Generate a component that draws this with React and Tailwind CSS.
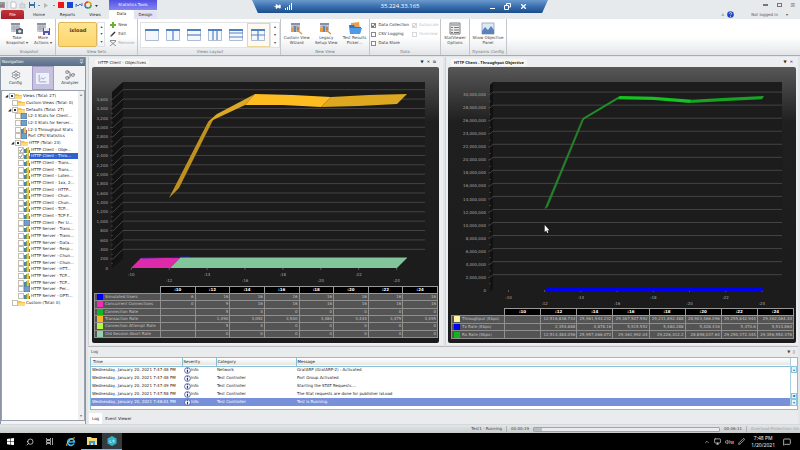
import { useState } from 'react';
import { Settings, Network, LineChart, Search, ChevronUp, MessageSquare, Monitor, Volume2, Pen, Pin } from 'lucide-react';

const treeItems = [
    { level: 0, label: 'Views (Total: 27)', kind: 'folder', mixed: true },
    { level: 1, label: 'Custom Views (Total: 0)', kind: 'folder' },
    { level: 1, label: 'Defaults (Total: 27)', kind: 'folder', mixed: true },
    { level: 2, label: 'L2-3 Stats for Client...', kind: 'grid' },
    { level: 2, label: 'L2-3 Stats for Server...', kind: 'grid' },
    { level: 2, label: 'L2-3 Throughput Stats', kind: 'chart' },
    { level: 2, label: 'Port CPU Statistics', kind: 'grid' },
    { level: 2, label: 'HTTP (Total: 23)', kind: 'folder', mixed: true },
    { level: 3, label: 'HTTP Client - Obje...', kind: 'chart', checked: true },
    { level: 3, label: 'HTTP Client - Thro...', kind: 'chart', checked: true, selected: true },
    { level: 3, label: 'HTTP Client - Trans...', kind: 'chart' },
    { level: 3, label: 'HTTP Client - Trans...', kind: 'chart' },
    { level: 3, label: 'HTTP Client - Laten...', kind: 'chart' },
    { level: 3, label: 'HTTP Client - 1xx, 2...', kind: 'chart' },
    { level: 3, label: 'HTTP Client - HTTP...', kind: 'chart' },
    { level: 3, label: 'HTTP Client - Chun...', kind: 'chart' },
    { level: 3, label: 'HTTP Client - Chun...', kind: 'chart' },
    { level: 3, label: 'HTTP Client - TCP...', kind: 'chart' },
    { level: 3, label: 'HTTP Client - TCP F...', kind: 'chart' },
    { level: 3, label: 'HTTP Client - Per U...', kind: 'grid' },
    { level: 3, label: 'HTTP Server - Trans...', kind: 'chart' },
    { level: 3, label: 'HTTP Server - Trans...', kind: 'chart' },
    { level: 3, label: 'HTTP Server - Data...', kind: 'chart' },
    { level: 3, label: 'HTTP Server - Resp...', kind: 'chart' },
    { level: 3, label: 'HTTP Server - Chun...', kind: 'chart' },
    { level: 3, label: 'HTTP Server - Chun...', kind: 'chart' },
    { level: 3, label: 'HTTP Server - HTT...', kind: 'chart' },
    { level: 3, label: 'HTTP Server - TCP...', kind: 'chart' },
    { level: 3, label: 'HTTP Server - TCP...', kind: 'chart' },
    { level: 3, label: 'HTTP Server - Per...', kind: 'grid' },
    { level: 3, label: 'HTTP Server - OPTI...', kind: 'chart' },
    { level: 1, label: 'Custom (Total: 0)', kind: 'folder' },
];

const indent = ['pl-[2px]', 'pl-[5px]', 'pl-[8px]', 'pl-[11px]'];

const times = [':10', ':12', ':14', ':16', ':18', ':20', ':22', ':24'];

const objectiveRows = [
    { name: 'Simulated Users', color: 'bg-[#0000ee]', values: ['6', '16', '16', '16', '16', '16', '16', '16'] },
    { name: 'Concurrent Connections', color: 'bg-[#f02cb4]', values: ['0', '9', '16', '16', '16', '16', '16', '16'] },
    { name: 'Connection Rate', color: 'bg-[#12b51e]', values: ['', '5', '4', '0', '0', '0', '0', '0'] },
    { name: 'Transaction Rate', color: 'bg-[#fbb321]', values: ['', '1,490', '3,092', '3,500', '3,484', '3,444', '3,475', '3,495'] },
    { name: 'Connection Attempt Rate', color: 'bg-[#b4f93c]', values: ['', '5', '4', '0', '0', '0', '0', '0'] },
    { name: 'Old Session Abort Rate', color: 'bg-[#93d3ac]', values: ['', '0', '0', '0', '0', '0', '0', '0'] },
];

const throughputRows = [
    { name: 'Throughput (Kbps)', color: 'bg-[#fdf3a0]', values: ['', '12,516,838.744', '25,961,944.232', '29,367,507.592', '29,231,892.488', '28,903,466.096', '29,255,842.944', '29,362,064.44'] },
    { name: 'Tx Rate (Kbps)', color: 'bg-[#0000ee]', values: ['', '2,354.688', '4,878.16', '5,515.552', '5,480.288', '5,428.416', '5,470.6', '5,514.864'] },
    { name: 'Rx Rate (Kbps)', color: 'bg-[#12b51e]', values: ['', '12,514,484.056', '25,957,066.072', '29,361,992.04', '29,226,412.2', '28,898,037.64', '29,250,372.344', '29,356,550.376'] },
];

const logRows = [
    ['Wednesday, January 20, 2021 7:47:48 PM', 'Network', 'GratARP (GratARP-2) : Activated'],
    ['Wednesday, January 20, 2021 7:47:48 PM', 'Test Controller', 'Port Group Activated'],
    ['Wednesday, January 20, 2021 7:47:49 PM', 'Test Controller', 'Starting the STAT Requests....'],
    ['Wednesday, January 20, 2021 7:47:58 PM', 'Test Controller', 'The Stat requests are done for publisher IxLoad'],
    ['Wednesday, January 20, 2021 7:48:01 PM', 'Test Controller', 'Test is Running.'],
];

const layouts = [
    'M0 0',
    'M7 2V11',
    'M0 6H14',
    'M5 2V11M9 2V11',
    'M0 4H14M0 8H14',
    'M7 2V11M0 6H14',
];

function TreeIcon({ kind }) {
    if (kind === 'folder') {
        return (
            <svg viewBox="0 0 7 6" className="h-[6px] w-[7px] shrink-0">
                <path d="M0 1h3l1 1h3v4H0z" fill="#f2c24d" />
                <path d="M0 3h7v3H0z" fill="#fbdc82" />
            </svg>
        );
    }
    if (kind === 'grid') {
        return (
            <svg viewBox="0 0 6 6" className="h-[6px] w-[6px] shrink-0">
                <path d="M0 0h6v6H0z" fill="#4a7fae" />
                <path d="M0 2H6M0 4H6M2 0V6M4 0V6" stroke="#a9cbe4" strokeWidth=".5" />
            </svg>
        );
    }
    return (
        <svg viewBox="0 0 6 6" className="h-[6px] w-[6px] shrink-0">
            <path d="M0 2h2v4H0z" fill="#4a86ad" />
            <path d="M2 1h1.500v5H2z" fill="#7fa04b" />
            <path d="M3.500 0H5v6H3.500z" fill="#eab94c" />
            <path d="M5 3h1v3H5z" fill="#b8624e" />
        </svg>
    );
}

// small table glyph with a camera, disk or bars drawn over it
function TableIcon({ overlay }) {
    return (
        <svg viewBox="0 0 14 13" className="h-[13px] w-[14px]">
            <path d="M1 1h9v9H1z" fill="#c9ccd4" />
            <path d="M1 1h9v2H1z" fill="#8a8f9f" />
            <path d="M1 5H10M1 7H10M4 1V10M7 1V10" stroke="#9397a6" strokeWidth=".6" />
            {overlay === 'camera' && (
                <g>
                    <path d="M6 7h2l1-1h2l1 1h1v5H6z" fill="#5c6374" />
                    <circle cx="9.700" cy="9.300" r="1.500" fill="#dfe5ee" />
                </g>
            )}
            {overlay === 'disk' && (
                <g>
                    <path d="M7 6h7v7H7z" fill="#5257a8" />
                    <path d="M8 6h5v3H8zM9 11h3v2H9z" fill="#e6e8f5" />
                </g>
            )}
            {overlay === 'bars' && (
                <g>
                    <path d="M1 6h3v4H1z" fill="#e99a3b" />
                    <path d="M4 4h2v6H4z" fill="#5a86c4" />
                    <path d="M7 5h2v5H7z" fill="#d47a3a" />
                    <path d="M7 8l5 4" stroke="#d39a45" strokeWidth="1.500" />
                </g>
            )}
        </svg>
    );
}

function RibbonButton({ icon, lines }) {
    return (
        <button type="button" className="flex flex-col items-center">
            {icon}
            {lines.map((line) => (
                <span key={line} className="whitespace-nowrap leading-[5px]">{line}</span>
            ))}
        </button>
    );
}

function RibbonGroup({ title, width, children }) {
    return (
        <section className={`flex shrink-0 flex-col border-r border-[#c3c6ca] ${width}`}>
            <div className="flex flex-1 items-start justify-around pt-[3px]">{children}</div>
            <h2 className="whitespace-nowrap pb-px text-center leading-[5px] text-[#73777d]">{title}</h2>
        </section>
    );
}

function Check({ label, checked, muted }) {
    return (
        <label className={`flex items-center gap-[2px] whitespace-nowrap ${muted ? 'text-[#c3c5c9]' : 'text-[#333]'}`}>
            <span className="grid">
                <input type="checkbox" defaultChecked={checked} disabled={muted} className={`col-start-1 row-start-1 h-[5px] w-[5px] appearance-none border bg-white ${muted ? 'border-[#d6d8dc]' : 'border-[#85898f]'}`} />
                {checked && (
                    <svg viewBox="0 0 5 5" className="pointer-events-none col-start-1 row-start-1 h-[5px] w-[5px]">
                        <path d="M1 2.500L2 4L4 1" fill="none" stroke={muted ? '#bbb' : '#333'} strokeWidth=".8" />
                    </svg>
                )}
            </span>
            {label}
        </label>
    );
}

function TitleBar() {
    return (
        <header className="relative bg-[#e6eaec]">
            <div className="flex h-[10px] items-center">
                <div className="flex w-[109px] items-center">
                    <svg viewBox="0 0 100 8" className="h-[8px] w-[100px]">
                        <path d="M0 1h5v6H0z" fill="#8d9ba2" />
                        <path d="M1 6V4M3 6V3" stroke="#c5493c" />
                        <path d="M7 0V8" stroke="#b8bcc0" strokeWidth=".6" />
                        <path d="M11 1h4l1 1v5h-5z" fill="#fff" stroke="#9da2a8" strokeWidth=".6" />
                        <path d="M20 3h5v4h-5zM21 2h2" fill="#d9dcdf" stroke="#b6b9be" strokeWidth=".6" />
                        <path d="M29 1h6v6h-6z" fill="#3f6f9d" />
                        <path d="M30 1h4v2h-4zM30 5h4v2h-4z" fill="#dcebf5" />
                        <path d="M38 4h2l-1 1zM53 4h2l-1 1zM95 4h3l-1.500 2z" fill="#333" />
                        <path d="M44 2l4 2.500-4 2.500z" fill="#b2b5b8" />
                        <path d="M58 1h6v6h-6z" fill="#ef1515" />
                        <path d="M67 1h6v6h-6z" fill="#1749d8" />
                        <path d="M76 6V3l2 2 2-2 2 2V2" fill="none" stroke="#3a78b5" />
                        <path d="M85 4a3 3 0 0 1 3-3" fill="none" stroke="#e03c2c" strokeWidth="1.500" />
                        <path d="M88 1a3 3 0 0 1 3 3" fill="none" stroke="#e79b2e" strokeWidth="1.500" />
                        <path d="M91 4a3 3 0 0 1-3 3" fill="none" stroke="#39a845" strokeWidth="1.500" />
                        <path d="M88 7a3 3 0 0 1-3-3" fill="none" stroke="#2f72c8" strokeWidth="1.500" />
                    </svg>
                </div>
                <div className="h-[10px] w-[48px] whitespace-nowrap bg-gradient-to-b from-[#5250e4] to-[#8785ee] text-center leading-[9px] text-white">Statistics Tools</div>
                <div className="ml-auto flex items-center gap-[9px] pr-[5px] text-[#666]">
                    <button type="button" aria-label="Minimize" className="h-[2px] w-[5px] border border-[#777]"></button>
                    <button type="button" aria-label="Restore" className="h-[4px] w-[5px] border border-[#777]"></button>
                    <button type="button" aria-label="Close" className="text-[5px] leading-none">☒</button>
                </div>
            </div>
            <nav className="flex h-[9px] items-end">
                <button type="button" className="ml-px h-[9px] w-[23px] rounded-t-[2px] bg-gradient-to-b from-[#c4343a] to-[#a51f28] text-white">File</button>
                <a href="#home" className="w-[30px] text-center leading-[8px]">Home</a>
                <a href="#reports" className="w-[27px] text-center leading-[8px]">Reports</a>
                <a href="#views" className="w-[28px] text-center leading-[8px]">Views</a>
                <a href="#data" className="h-[9px] w-[25px] rounded-t-[2px] bg-white text-center leading-[8px]">Data</a>
                <a href="#design" className="h-[8px] w-[23px] bg-[#e3e1f4] text-center leading-[8px]">Design</a>
                <div className="ml-auto flex items-center gap-[3px] pb-px text-[#555]">
                    <span>⌂</span>
                    <svg viewBox="0 0 7 7" className="h-[7px] w-[7px]">
                        <circle cx="3.500" cy="3.500" r="3.300" fill="#1646c4" />
                        <path d="M2.300 2.600c0-1.500 2.400-1.500 2.400 0 0 .8-1.200.8-1.200 1.700M3.500 5v.8" stroke="#fff" strokeWidth=".8" fill="none" />
                    </svg>
                    <button type="button" className="ml-[14px] mr-[12px] flex gap-[8px] whitespace-nowrap">
                        <span>Not logged in</span>
                        <span>▾</span>
                    </button>
                </div>
            </nav>

            {/* Remote desktop connection bar */}
            <div className="absolute left-1/2 top-0 flex h-[13px] w-[296px] -translate-x-1/2 items-center justify-between bg-gradient-to-b from-[#6b9bcd] via-[#3a6fae] to-[#1c4d8d] px-[22px] font-['Open_Sans',sans-serif] text-[6px] text-white [clip-path:polygon(0_0,100%_0,98%_100%,2%_100%)]">
                <div className="flex w-[36px] items-center gap-[4px]">
                    <Pin className="h-[7px] w-[7px] rotate-90" fill="currentColor" />
                    <svg viewBox="0 0 8 7" className="h-[7px] w-[8px]">
                        <path d="M0 7V5h1v2zM2 7V4h1v3zM4 7V2h1v5zM6 7V0h1v7z" fill="#fff" />
                    </svg>
                </div>
                <span>35.224.33.165</span>
                <div className="flex w-[36px] items-center justify-between">
                    <span className="mt-[4px] h-px w-[5px] bg-white"></span>
                    <svg viewBox="0 0 7 7" className="h-[7px] w-[7px]">
                        <path d="M2.500 2V.500H6.500V4H5M.500 2.500h4v4h-4z" fill="none" stroke="#fff" />
                    </svg>
                    <svg viewBox="0 0 5 5" className="h-[5px] w-[5px]">
                        <path d="M0 0L5 5M5 0L0 5" stroke="#fff" strokeWidth="1.300" />
                    </svg>
                </div>
            </div>
        </header>
    );
}

function Ribbon() {
    return (
        <div className="flex h-[37px] border-b border-[#a9adb2] bg-gradient-to-b from-white from-50% to-[#e2e5e8] text-[#444]">
            <RibbonGroup title="Snapshot" width="w-[56px] pl-[3px]">
                <RibbonButton icon={<TableIcon overlay="camera" />} lines={['Take', 'Snapshot ▾']} />
                <RibbonButton icon={<TableIcon overlay="disk" />} lines={['More', 'Actions ▾']} />
            </RibbonGroup>
            <RibbonGroup title="View Sets" width="w-[82px]">
                <div className="flex h-[25px]">
                    <button type="button" className="w-[39px] rounded-[2px] border border-[#ddb75a] bg-gradient-to-b from-[#ffe58f] to-[#fbd66b] pb-[8px] text-[5px] font-bold text-[#4c3d13]">ixload</button>
                    <div className="flex w-[8px] flex-col items-center justify-around border border-[#dfe1e4] leading-none">
                        <span>▴</span>
                        <span>▾</span>
                        <span>▾</span>
                    </div>
                </div>
                <div className="flex flex-col gap-[3px] leading-[6px]">
                    <button type="button" className="flex items-center gap-[2px]">
                        <svg viewBox="0 0 6 6" className="h-[6px] w-[6px]"><path d="M2 0h2v2h2v2H4v2H2V4H0V2h2z" fill="#66b32e" /></svg>
                        New
                    </button>
                    <button type="button" className="flex items-center gap-[2px]">
                        <svg viewBox="0 0 6 6" className="h-[6px] w-[6px]"><path d="M1 5L5 1" stroke="#333" strokeWidth="1.500" /><path d="M0 6l1-2 1 1z" fill="#777" /></svg>
                        Edit
                    </button>
                    <button type="button" disabled className="flex items-center gap-[2px] text-[#a5a8ac]">
                        <svg viewBox="0 0 6 6" className="h-[6px] w-[6px]"><path d="M0 1l6 5M6 1L0 6M0 .500h6" stroke="#8b8e93" /></svg>
                        Remove
                    </button>
                </div>
            </RibbonGroup>
            <RibbonGroup title="Views Layout" width="w-[143px] pl-[2px]">
                <div className="flex h-[26px] w-full border border-[#e0e2e5] bg-white">
                    {layouts.map((d, i) => (
                        <button key={d} type="button" aria-label={`Layout ${i + 1}`} className={`flex flex-1 items-center justify-center ${i === 5 ? 'border border-[#ecd79a] bg-[#fffaf0]' : ''}`}>
                            <svg viewBox="0 0 14 12" className="h-[12px] w-[14px]">
                                <path d="M.500 .500h13v11H.500z" fill="#f4f7fc" stroke="#8ba3c6" strokeWidth=".7" />
                                <path d="M0 0h14v2H0z" fill="#4f80c6" />
                                <path d={d} stroke="#5683c0" strokeWidth="1.200" />
                            </svg>
                        </button>
                    ))}
                    <div className="flex w-[9px] flex-col items-center justify-around border-l border-[#dfe1e4] leading-none">
                        <span>▴</span>
                        <span>▾</span>
                        <span>▾</span>
                    </div>
                </div>
            </RibbonGroup>
            <RibbonGroup title="New View" width="w-[89px]">
                <RibbonButton icon={<TableIcon overlay="bars" />} lines={['Custom View', 'Wizard']} />
                <RibbonButton icon={<TableIcon overlay="bars" />} lines={['Legacy', 'Setup View']} />
                <RibbonButton
                    icon={(
                        <svg viewBox="0 0 14 13" className="h-[13px] w-[14px]">
                            <path d="M3 1l8-1 1 8H3z" fill="#e8a04d" />
                            <path d="M1 3h5l1 2h6l-1 7H2z" fill="#2a76cd" />
                            <path d="M2 6h12l-2 6H2z" fill="#4d9ae6" />
                        </svg>
                    )}
                    lines={['Test Results', 'Picker...']}
                />
            </RibbonGroup>
            <RibbonGroup title="Data" width="w-[71px]">
                <div className="flex flex-col gap-[3px] leading-[6px]">
                    <Check label="Data Collection" checked />
                    <Check label="CSV Logging" />
                    <Check label="Data Store" />
                </div>
                <div className="flex flex-col gap-[3px] leading-[6px]">
                    <Check label="Autoscale" checked muted />
                    <Check label="Overview" muted />
                </div>
            </RibbonGroup>
            <RibbonGroup title="" width="w-[29px]">
                <RibbonButton
                    icon={(
                        <svg viewBox="0 0 14 13" className="h-[13px] w-[14px]">
                            <path d="M2 1h10v11H2z" fill="#eee" stroke="#7a7d82" />
                            <path d="M3 3h8M3 5.500h2M6 5.500h5M3 8h2M6 8h5M3 10.500h2M6 10.500h5" stroke="#777" />
                        </svg>
                    )}
                    lines={['StatViewer', 'Options']}
                />
            </RibbonGroup>
            <RibbonGroup title="Dynamic Config" width="w-[37px]">
                <RibbonButton
                    icon={(
                        <svg viewBox="0 0 14 13" className="h-[13px] w-[14px]">
                            <path d="M1 1h12v11H1z" fill="#dfe8f4" stroke="#8aa0c0" strokeWidth=".8" />
                            <path d="M1 9l3-4 3 3 3-4 3 4v4H1z" fill="#5c83b8" />
                        </svg>
                    )}
                    lines={['Show Objective', 'Panel']}
                />
            </RibbonGroup>
        </div>
    );
}

function Navigation() {
    return (
        <aside className="flex w-[86px] shrink-0 flex-col border-x border-[#8b95a3] bg-[#f2f3f5]">
            <div className="flex h-[9px] items-center justify-between bg-gradient-to-b from-[#7b8ea5] to-[#5a6e87] px-px text-white">
                <span>Navigation</span>
                <Pin className="h-[5px] w-[5px]" />
            </div>
            <div className="flex h-[24px] justify-between px-px text-[#333]">
                <button type="button" className="flex w-[27px] flex-col items-center justify-center">
                    <Settings className="h-[10px] w-[10px] text-[#777]" />
                    Config
                </button>
                <button type="button" aria-label="Statistics" className="flex w-[22px] items-center justify-center border border-[#a29cc6] bg-[#c5c1df]">
                    <span className="flex h-[11px] w-[13px] items-center justify-center bg-[#eef0fb]">
                        <LineChart className="h-[9px] w-[11px] text-[#8291b8]" />
                    </span>
                </button>
                <button type="button" className="flex w-[28px] flex-col items-center justify-center">
                    <Network className="h-[10px] w-[10px] rotate-90 text-[#777]" />
                    Analyzer
                </button>
            </div>
            <div className="mb-[3px] flex flex-1 border border-[#9aa2ad] bg-white">
                <ul className="flex h-[215px] min-w-0 flex-1 flex-col pt-[2px]">
                    {treeItems.map((item, i) => (
                        <li key={i} className={`flex min-h-0 flex-1 items-center ${indent[item.level]}`}>
                            <span className="w-[5px] shrink-0 text-center leading-none">{item.mixed ? '◢' : ''}</span>
                            <label className="flex min-w-0 flex-1 items-center">
                                <span className="grid shrink-0">
                                    <input type="checkbox" defaultChecked={item.checked} className="col-start-1 row-start-1 h-[6px] w-[6px] appearance-none border border-[#c4beb2] bg-white" />
                                    {item.mixed && <span className="pointer-events-none col-start-1 row-start-1 m-auto h-[2px] w-[2px] bg-[#333]"></span>}
                                    {item.checked && (
                                        <svg viewBox="0 0 6 6" className="pointer-events-none col-start-1 row-start-1 h-[6px] w-[6px]">
                                            <path d="M1.500 3L2.500 4.500L4.500 1.500" fill="none" stroke="#555" strokeWidth=".7" />
                                        </svg>
                                    )}
                                </span>
                                <TreeIcon kind={item.kind} />
                                <span className={`whitespace-nowrap pl-px leading-[6px] ${item.selected ? 'flex-1 bg-[#2f5fd0] text-white' : ''}`}>{item.label}</span>
                            </label>
                        </li>
                    ))}
                </ul>
                <div className="flex w-[6px] shrink-0 flex-col items-center justify-between bg-[#eceef0] py-[2px] leading-none text-[#777]">
                    <span>▴</span>
                    <span>▾</span>
                </div>
            </div>
        </aside>
    );
}

function PaneTitle({ title, bold, restore }) {
    return (
        <div className="flex h-[10px] items-center justify-between px-[3px]">
            <h3 className={`rounded-[2px] bg-[#f6f7f5] px-[3px] leading-[7px] ${bold ? "font-['Noto_Sans',sans-serif] font-bold" : ''}`}>{title}</h3>
            <div className="flex gap-[3px] leading-none">
                <button type="button" aria-label="Pane menu">▼</button>
                <button type="button" aria-label="Close pane">✕</button>
                {restore && <button type="button" aria-label="Dock pane">⧉</button>}
            </div>
        </div>
    );
}

function DataTable({ rows, labelWidth, height }) {
    return (
        <table className={`w-full table-fixed border-collapse leading-none text-[#c4c4c4] ${height}`}>
            <thead>
                <tr className="h-[7px] text-white">
                    <th className={`p-0 ${labelWidth}`}></th>
                    {times.map((t) => (
                        <th key={t} className="border border-[#999] bg-black p-0 font-bold">{t}</th>
                    ))}
                </tr>
            </thead>
            <tbody>
                {rows.map((row) => (
                    <tr key={row.name} className="bg-[#545454]">
                        <th className="border border-[#8f8f8f] p-0 pl-[2px] text-left font-normal">
                            <span className="flex items-center gap-[2px] whitespace-nowrap">
                                <span className={`h-[6px] w-[6px] shrink-0 ${row.color}`}></span>
                                {row.name}
                            </span>
                        </th>
                        {row.values.map((value, i) => (
                            <td key={i} className="border border-[#8f8f8f] p-0 pr-px text-right">{value}</td>
                        ))}
                    </tr>
                ))}
            </tbody>
        </table>
    );
}

function ObjectivesChart() {
    const ticks = Array.from({ length: 19 }, (_, i) => i * 200);
    return (
        <svg viewBox="92 68 347 219" className="block w-full" fontSize="4" fill="#a9a9a9">
            <path d="M123 83H425V260H123z" fill="#1c1c1c" />
            <path d="M112 93L123 83V260L112 269z" fill="#131313" />
            {ticks.map((t, i) => {
                const y = 269.3 - i * 9.39;
                return (
                    <g key={t}>
                        {i > 0 && <path d={`M110 ${y}h3L123 ${y - 9.6}H425`} fill="none" stroke="#4e4e4e" strokeWidth=".8" />}
                        {i > 0 && <path d={`M111 ${y + 4.7}h2`} stroke="#555" strokeWidth=".6" />}
                        <text x="108" y={y + 1.5} textAnchor="end">{t.toLocaleString('en-US')}</text>
                    </g>
                );
            })}
            {times.map((t, i) => (
                <g key={t}>
                    <path d={`M${131.3 + i * 37.9} 269v2`} stroke="#888" strokeWidth=".6" />
                    <text x={131.3 + i * 37.9} y={i % 2 ? 283 : 277} textAnchor="middle">{t}</text>
                </g>
            ))}
            <path d="M169 199L208 123L217 115L213 121L179 189z" fill="#bf921f" />
            <path d="M208 123L217 115L255 95L245 106L213 121z" fill="#dca725" />
            <path d="M245 106L255 95L293 96L331 98L321 108L283 106z" fill="#fdbd21" />
            <path d="M321 108L331 98L369 96L407 95L397 105L359 107z" fill="#dda81f" />
            <path d="M131 269L141 259H180L170 269z" fill="#dd2aa8" />
            <path d="M142 259L190 258" stroke="#1b1bd0" />
            <path d="M180 258.700H407" stroke="#c2478f" />
            <path d="M170 269L180 259H407L397 269z" fill="#83c59b" />
        </svg>
    );
}

function ThroughputChart() {
    const ticks = Array.from({ length: 16 }, (_, i) => i * 2000000);
    return (
        <svg viewBox="448 68 348 241" className="block w-full" fontSize="4" fill="#a9a9a9">
            <path d="M493 83H782V290H493z" fill="#1c1c1c" />
            <path d="M490 86L493 83V290L490 292z" fill="#111" />
            {ticks.map((t, i) => {
                const y = 291.3 - i * 13.04;
                return (
                    <g key={t}>
                        {i > 0 && <path d={`M488 ${y}h2L493 ${y - 2.6}H782`} fill="none" stroke="#4e4e4e" strokeWidth=".8" />}
                        {i > 0 && <path d={`M489 ${y + 6.5}h2`} stroke="#555" strokeWidth=".6" />}
                        <text x="486" y={y + 1.5} textAnchor="end">{t.toLocaleString('en-US')}</text>
                    </g>
                );
            })}
            {times.map((t, i) => (
                <g key={t}>
                    <path d={`M${508.5 + i * 36.2} 291v2`} stroke="#888" strokeWidth=".6" />
                    <text x={508.5 + i * 36.2} y={i % 2 ? 306 : 300} textAnchor="middle">{t}</text>
                </g>
            ))}
            <path d="M545 209.500L581.700 121.500L583.300 120L583 122L547.500 208z" fill="#27832c" stroke="#27832c" strokeWidth=".6" />
            <path d="M581.700 121.500L583.300 119L620 97L618.700 99.500z" fill="#22962a" stroke="#22962a" strokeWidth=".5" />
            <path d="M618 100.300L620 97L653 97.800L692 100.700L690 104L654 101z" fill="#14c222" />
            <path d="M690 104L692 100.700L727 98.700L764 97L762 100.300L726 102z" fill="#17a423" />
            <path d="M545 292L547 289H764L762 292z" fill="#0000f0" />
            <path d="M544.700 226v7l1.600-1.400 1 2.400 1-.4-1-2.400h2z" fill="#fff" />
        </svg>
    );
}

function LogPanel() {
    const [tab, setTab] = useState('Log');
    const tabs = ['Log', 'Event Viewer'];
    return (
        <section className="mt-px flex flex-1 flex-col border-t border-[#b9bdc2] bg-[#e9ebed]">
            <div className="flex h-[10px] items-center justify-between px-[3px] text-[#444]">
                <h3>Log</h3>
                <span>▼ &nbsp;▯</span>
            </div>
            <div className="ml-[2px] flex border border-[#86bfd6] bg-white pb-[3px]">
                <table className="w-full table-fixed border-collapse text-left leading-none text-[#222]">
                    <thead>
                        <tr className="h-[8px] border-b border-[#86bfd6] bg-gradient-to-b from-white to-[#e6e6e4]">
                            <th className="w-[91px] border-r border-[#86bfd6] p-0 pl-[2px] font-normal">Time</th>
                            <th className="w-[34px] border-r border-[#86bfd6] p-0 pl-px font-normal">Severity</th>
                            <th className="w-[80px] border-r border-[#86bfd6] p-0 pl-px font-normal">Category</th>
                            <th className="p-0 pl-px font-normal">Message</th>
                        </tr>
                    </thead>
                    <tbody>
                        {logRows.map(([time, category, message], i) => (
                            <tr key={i} className={`h-[8px] ${i === 4 ? 'bg-[#7890da] text-white' : ''}`}>
                                <td className="whitespace-nowrap p-0 pl-px">{time}</td>
                                <td className="p-0 pl-[2px]">
                                    <span className="flex items-center">
                                        <svg viewBox="0 0 7 7" className="h-[7px] w-[7px]">
                                            <circle cx="3.500" cy="3.500" r="2.900" fill="#fff" stroke="#23398f" strokeWidth=".7" />
                                            <path d="M3.500 1.300v1M3.500 3v2.600" stroke="#1c2f8a" strokeWidth="1.200" />
                                        </svg>
                                        Info
                                    </span>
                                </td>
                                <td className="whitespace-nowrap p-0 pl-px">{category}</td>
                                <td className="whitespace-nowrap p-0 pl-px">{message}</td>
                            </tr>
                        ))}
                    </tbody>
                </table>
                <div className="flex w-[7px] shrink-0 flex-col border-l border-[#a8d0e0] pt-[8px] text-[#2f7fa6]">
                    <span className="h-[7px] border border-[#8cc5dc] bg-[#e4f3fa] text-center leading-[5px]">▴</span>
                    <span className="mt-auto h-[6px] border border-[#8cc5dc] bg-[#e4f3fa] text-center leading-[4px]">▪</span>
                    <span className="h-[7px] border border-[#8cc5dc] bg-[#e4f3fa] text-center leading-[5px]">▾</span>
                </div>
            </div>
            <div className="mt-[3px] flex px-px">
                {tabs.map((t) => (
                    <button key={t} type="button" onClick={() => setTab(t)} className={`h-[11px] px-[3px] ${tab === t ? 'bg-white' : ''}`}>{t}</button>
                ))}
            </div>
        </section>
    );
}

function StatusBar() {
    return (
        <div className="flex h-[9px] items-center justify-end gap-[4px] whitespace-nowrap border-t border-[#d5d8da] bg-gradient-to-b from-[#e4e7e8] to-[#c9cccd] pr-px text-[#444]">
            <span className="border-r border-[#b0b3b5] pr-[4px]">Test1 - Running</span>
            <span>00:00:19</span>
            <div className="h-[5px] w-[187px] rounded-[1px] border border-[#a2a5a8] bg-[#e9ebec]">
                <div className="h-[3px] w-[8px] bg-[#b9bcbe]"></div>
            </div>
            <span className="border-r border-[#b0b3b5] pr-[4px]">00:06:11</span>
            <span className="text-[#a0a3a6]">Overload Protection: On</span>
        </div>
    );
}

function Taskbar() {
    return (
        <footer className="flex h-[17px] items-stretch bg-black text-white">
            <button type="button" aria-label="Start" className="flex w-[20px] items-center justify-center">
                <svg viewBox="0 0 7 7" className="h-[7px] w-[7px]"><path d="M0 1l3-.5v3H0zM3.500 .400L7 0v3.500H3.500zM0 4h3v2.700L0 6.200zM3.500 4H7v3.200L3.500 6.700z" fill="#fff" /></svg>
            </button>
            <button type="button" aria-label="Search" className="flex w-[20px] items-center justify-center">
                <Search className="h-[8px] w-[8px] -scale-x-100" />
            </button>
            <button type="button" aria-label="Task view" className="flex w-[20px] items-center justify-center">
                <svg viewBox="0 0 8 7" className="h-[7px] w-[8px]"><path d="M.500 0v1.500h4V0M.500 2.500h4v2h-4zM.500 7V5.500h4V7M6.500 0v7" fill="none" stroke="#ccc" strokeWidth=".8" /></svg>
            </button>
            <button type="button" aria-label="Internet Explorer" className="flex w-[21px] items-center justify-center">
                <svg viewBox="0 0 10 10" className="h-[10px] w-[10px]">
                    <path d="M8 6.500A3.300 3.300 0 1 1 8.300 5H3" fill="none" stroke="#3fb4ee" strokeWidth="1.700" />
                    <path d="M1 9C-1 7 6 0 9 1" fill="none" stroke="#f2c53a" strokeWidth=".9" />
                </svg>
            </button>
            <button type="button" aria-label="File Explorer" className="flex w-[21px] items-center justify-center border-b border-[#76b9ed]">
                <svg viewBox="0 0 10 8" className="h-[8px] w-[10px]">
                    <path d="M0 0h4l1 1h5v7H0z" fill="#f7d774" />
                    <path d="M2 4h6v4H2z" fill="#3a9bd0" />
                    <path d="M4 6h2v2H4z" fill="#f7d774" />
                </svg>
            </button>
            <button type="button" aria-label="IxLoad" className="flex w-[20px] items-center justify-center border-b border-[#76b9ed] bg-[#353a3e]">
                <svg viewBox="0 0 10 10" className="h-[10px] w-[10px]">
                    <path d="M5 0l4.500 2.500v5L5 10 .500 7.500v-5z" fill="#2fb3c9" />
                    <path d="M3 4v2.500h1.500M6 4h1v2H6z" fill="none" stroke="#c9f1f5" strokeWidth=".7" />
                </svg>
            </button>
            <div className="ml-auto flex items-center gap-[4px] pr-[9px]">
                <ChevronUp className="h-[6px] w-[6px]" />
                <Monitor className="h-[7px] w-[7px]" />
                <span className="flex items-center">
                    <Volume2 className="h-[6px] w-[6px]" />
                    <span className="mt-[2px] h-[3px] w-[3px] bg-[#e0303a]"></span>
                </span>
                <Pen className="h-[7px] w-[7px]" />
                <div className="ml-[2px] mr-[4px] text-center font-['Open_Sans',sans-serif] text-[5px] leading-[7px]">
                    <div>7:48 PM</div>
                    <div>1/20/2021</div>
                </div>
                <MessageSquare className="h-[8px] w-[8px]" />
            </div>
        </footer>
    );
}

function App() {
    return (
        <div className="flex min-h-screen flex-col bg-[#e3e6e9] font-['DejaVu_Sans','Noto_Sans',sans-serif] text-[4px] leading-normal text-[#222]">
            <TitleBar />
            <Ribbon />
            <main className="flex flex-1 gap-[2px] pr-[2px] pt-px">
                <Navigation />
                <div className="flex min-w-0 flex-1 flex-col">
                    <div className="flex gap-[2px]">
                        <section className="flex min-w-0 flex-[347] flex-col border-l border-[#cfd3d6] bg-[#eceef0] pb-[2px] pl-[3px] pr-[4px]">
                            <PaneTitle title="HTTP Client - Objectives" restore />
                            <div className="flex-1 rounded-[2px] bg-gradient-to-b from-[#585858] via-[#1f1f1f] via-20% to-[#1b1b1b] pb-[4px]">
                                <ObjectivesChart />
                                <div className="pl-[2px] pr-px">
                                    <DataTable rows={objectiveRows} labelWidth="w-[66px]" height="h-[52px]" />
                                </div>
                            </div>
                        </section>
                        <section className="flex min-w-0 flex-[348] flex-col border-l border-[#cfd3d6] bg-[#eceef0] pb-[2px] pl-[2px] pr-[2px]">
                            <PaneTitle title="HTTP Client - Throughput Objective" bold />
                            <div className="flex-1 rounded-[2px] bg-gradient-to-b from-[#585858] via-[#1f1f1f] via-20% to-[#1b1b1b] pb-[4px]">
                                <ThroughputChart />
                                <div className="pl-[3px] pr-[2px]">
                                    <DataTable rows={throughputRows} labelWidth="w-[53px]" height="h-[31px]" />
                                </div>
                            </div>
                        </section>
                    </div>
                    <LogPanel />
                </div>
            </main>
            <StatusBar />
            <Taskbar />
        </div>
    );
}

export default App;
